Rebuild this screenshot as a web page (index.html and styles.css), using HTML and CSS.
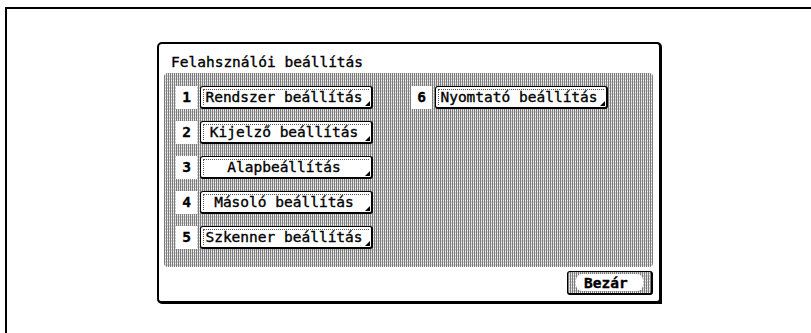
FILE: index.html
```html
<!DOCTYPE html>
<html lang="hu">
<head>
    <meta charset="UTF-8">
    <title>Felhasználói beállítás</title>
    <link rel="stylesheet" href="styles.css">
</head>
<body>
    <div class="screen">
        <div class="dialog">
            <div class="title">Felahsználói beállítás</div>
            <div class="panel">
                <div class="col">
                    <div class="row"><span class="num">1</span><button class="item">Rendszer beállítás</button></div>
                    <div class="row"><span class="num">2</span><button class="item">Kijelző beállítás</button></div>
                    <div class="row"><span class="num">3</span><button class="item">Alapbeállítás</button></div>
                    <div class="row"><span class="num">4</span><button class="item">Másoló beállítás</button></div>
                    <div class="row"><span class="num">5</span><button class="item">Szkenner beállítás</button></div>
                </div>
                <div class="col">
                    <div class="row"><span class="num">6</span><button class="item">Nyomtató beállítás</button></div>
                </div>
            </div>
            <div class="footer">
                <button class="close"><span>Bezár</span></button>
            </div>
        </div>
    </div>
</body>
</html>
```

FILE: styles.css
```css
body {
    margin: 0;
    background: #fff;
    font-family: "DejaVu Sans Mono", "Liberation Mono", monospace;
    font-size: 14.5px;
    color: #000;
    -webkit-text-stroke: 0.35px #000;
}
.screen {
    margin: 7px 0 0 5px;
    height: 324px;
    border-left: 2px solid #000;
    border-top: 2px solid #000;
    overflow: hidden;
}
.dialog {
    box-sizing: border-box;
    width: 505px;
    height: 262px;
    margin: 33px 0 0 150px;
    border: 2px solid #000;
    border-right-width: 3px;
    border-bottom-width: 3px;
    border-radius: 5px;
    position: relative;
}
.dialog::after {
    content: "";
    position: absolute;
    right: -3px;
    bottom: -3px;
    border-style: solid;
    border-width: 0 0 6px 6px;
    border-color: transparent transparent #000 transparent;
}
.title {
    box-sizing: border-box;
    height: 29px;
    padding: 9px 0 0 12px;
    line-height: 18px;
}
.panel {
    box-sizing: border-box;
    height: 194px;
    margin: 0 6px 0 5px;
    padding: 13px 0 0 12px;
    border-radius: 4px;
    display: flex;
    gap: 38px;
    background-color: #d0d0d0;
    background-image:
        repeating-linear-gradient(90deg, #7c7c7c 0 1px, transparent 1px 2px),
        repeating-linear-gradient(0deg, #f4f4f4 0 1px, transparent 1px 3px);
}
.col {
    display: flex;
    flex-direction: column;
    gap: 12px;
}
.row {
    display: flex;
    height: 23px;
}
.num {
    width: 21px;
    margin-right: 3px;
    background: #fff;
    font-weight: bold;
    text-align: center;
    line-height: 23px;
}
.item {
    box-sizing: border-box;
    width: 173px;
    height: 23px;
    padding: 0 4px 0 0;
    border: 1px solid #000;
    border-right-width: 2px;
    border-bottom-width: 2px;
    border-radius: 3px;
    background: #fff;
    font: inherit;
    color: #000;
    text-align: center;
    white-space: nowrap;
    position: relative;
}
.item::before {
    content: "";
    position: absolute;
    left: 2px;
    top: 2px;
    right: 2px;
    bottom: 2px;
    border-left: 1px dotted #555;
    border-top: 1px dotted #555;
}
.item::after {
    content: "";
    position: absolute;
    right: 1px;
    bottom: 1px;
    border-style: solid;
    border-width: 0 0 5px 5px;
    border-color: transparent transparent #000 transparent;
}
.footer {
    display: flex;
    justify-content: flex-end;
    padding: 4px 6px 0 0;
}
.close {
    box-sizing: border-box;
    width: 86px;
    height: 24px;
    padding: 2px;
    border: 1px solid #000;
    border-right-width: 2px;
    border-bottom-width: 2px;
    border-radius: 3px;
    background-color: #d0d0d0;
    background-image:
        repeating-linear-gradient(90deg, #7c7c7c 0 1px, transparent 1px 2px),
        repeating-linear-gradient(0deg, #f4f4f4 0 1px, transparent 1px 3px);
    font: inherit;
    font-weight: bold;
    color: #000;
}
.close span {
    display: block;
    height: 100%;
    margin: 0 6px;
    background: #fff;
    border-radius: 6px;
    line-height: 18px;
    text-align: left;
    padding-left: 8px;
}
```
